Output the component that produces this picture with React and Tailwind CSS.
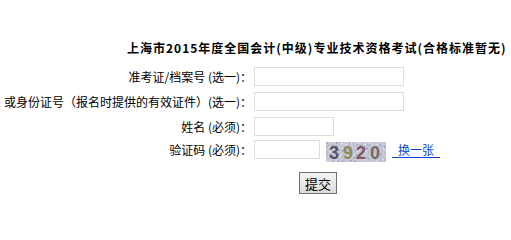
import { useState } from "react";

const FONT = { fontFamily: '"Noto Sans CJK SC", "Liberation Sans", sans-serif' };

// captcha noise, fixed so the picture is stable
const NOISE = Array.from({ length: 170 }, (_, i) => {
  const x = (i * 37) % 60;
  const y = (i * 17 + Math.floor(i / 7) * 3) % 20;
  const shades = ["#9aa0b4", "#e4e6ee", "#b2b6c6", "#f2f2f6", "#8c90a4", "#d0d4e0"];
  return { x, y, fill: shades[i % shades.length] };
});

function Captcha() {
  return (
    <svg width="60" height="20" viewBox="0 0 60 20" className="block shrink-0">
      <rect width="60" height="20" fill="#c3c7d4" />
      {NOISE.map((n, i) => (
        <rect key={i} x={n.x} y={n.y} width="1.5" height="1.5" fill={n.fill} />
      ))}
      <g fontFamily="Liberation Sans, sans-serif" fontSize="18" fontWeight="bold">
        <text x="3" y="16.5" fill="#5e4e62">3</text>
        <text x="17" y="16.5" fill="#958a52">9</text>
        <text x="30" y="16.5" fill="#845468">2</text>
        <text x="44" y="16.5" fill="#76686a">0</text>
      </g>
    </svg>
  );
}

function Row({ label, children, className = "" }) {
  return (
    <div className={`flex items-start ${className}`}>
      <div className="w-[252px] shrink-0 text-right text-[12px] leading-[19px] text-black whitespace-nowrap">
        {label}
      </div>
      <div className="ml-[2px] flex items-start">{children}</div>
    </div>
  );
}

const inputCls = "h-[19px] border border-[#dcdcdc] bg-white outline-none px-1 text-[12px]";

export default function App() {
  const [form, setForm] = useState({ zkz: "", sfz: "", name: "", code: "" });
  const set = (k) => (e) => setForm({ ...form, [k]: e.target.value });

  return (
    <div className="w-[511px] h-[215px] bg-white overflow-hidden" style={FONT}>
      <div className="pt-[38px] pl-[127px] h-[58px] text-[12px] leading-[20px] font-bold tracking-[1px] text-black whitespace-nowrap">
        上海市2015年度全国会计(中级)专业技术资格考试(合格标准暂无)
      </div>

      <Row label="准考证/档案号 (选一)：" className="mt-[9px]">
        <input className={`${inputCls} w-[150px]`} value={form.zkz} onChange={set("zkz")} />
      </Row>
      <Row label="或身份证号（报名时提供的有效证件）(选一)：" className="mt-[6px]">
        <input className={`${inputCls} w-[150px]`} value={form.sfz} onChange={set("sfz")} />
      </Row>
      <Row label="姓名 (必须)：" className="mt-[6px]">
        <input className={`${inputCls} w-[80px]`} value={form.name} onChange={set("name")} />
      </Row>
      <Row label="验证码 (必须)：" className="mt-[4px]">
        <input className={`${inputCls} w-[66px]`} value={form.code} onChange={set("code")} />
        <div className="ml-[6px] mt-[2px]">
          <Captcha />
        </div>
        <a
          href="#"
          className="ml-[6px] mt-[2px] px-[6px] text-[12px] leading-[15px] text-[#0a45d0] no-underline border-b border-[#0a45d0]"
        >
          换一张
        </a>
      </Row>

      <div className="mt-[10px] pl-[299px]">
        <button className="block w-[38px] h-[22px] border border-[#707070] bg-gradient-to-b from-[#f4f4f4] to-[#dcdcdc] text-[13px] leading-none text-black">
          提交
        </button>
      </div>
    </div>
  );
}
